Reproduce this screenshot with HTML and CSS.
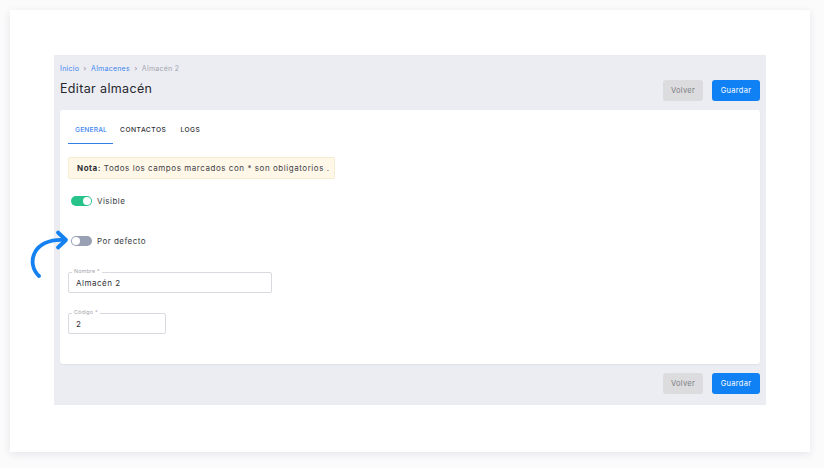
FILE: index.html
```html
<!DOCTYPE html>
<html>
<head>
<meta charset="utf-8">
<link rel="stylesheet" href="styles.css">
</head>
<body>
<div class="frame">
  <div class="panel">
    <div class="head">
      <div class="head-left">
        <nav class="crumbs"><a>Inicio</a><span class="sep">›</span><a>Almacenes</a><span class="sep">›</span><span class="cur">Almacén 2</span></nav>
        <h1 class="title">Editar almacén</h1>
      </div>
      <div class="actions">
        <button class="btn btn-grey">Volver</button>
        <button class="btn btn-blue">Guardar</button>
      </div>
    </div>
    <div class="card">
      <div class="tabs">
        <div class="tab active">GENERAL</div>
        <div class="tab">CONTACTOS</div>
        <div class="tab">LOGS</div>
      </div>
      <div class="note"><b>Nota:</b> Todos los campos marcados con * son obligatorios .</div>
      <div class="switch-row visible-row"><span class="switch on"><span class="knob"></span></span><span class="switch-label">Visible</span></div>
      <div class="switch-row default-row">
        <svg class="arrow" width="52" height="56" viewBox="0 0 52 56"><path d="M19 52 C 6 40, 12 14, 45 16" fill="none" stroke="#1581f0" stroke-width="3.8" stroke-linecap="round"/><path d="M38 8.5 L46 16 L38 23.5" fill="none" stroke="#1581f0" stroke-width="3.8" stroke-linecap="round" stroke-linejoin="round"/></svg>
        <span class="switch off"><span class="knob"></span></span><span class="switch-label">Por defecto</span></div>
      <div class="field field-name"><label>Nombre *</label><div class="input">Almacén 2</div></div>
      <div class="field field-code"><label>Código *</label><div class="input">2</div></div>
    </div>
    <div class="foot">
      <button class="btn btn-grey">Volver</button>
      <button class="btn btn-blue">Guardar</button>
    </div>
  </div>
</div>
</body>
</html>
```
FILE: styles.css
```css
* { box-sizing: border-box; }
html, body { margin: 0; padding: 0; background: #fbfbfc; }
body { font-family: "Inter", "Open Sans", sans-serif; color: #2b2d33; width: 824px; height: 468px; overflow: hidden; }
.frame {
  margin: 10px 0 0 10px;
  width: 800px; height: 442px;
  background: #fff;
  box-shadow: 0 2px 8px rgba(30, 40, 70, 0.10);
  padding: 45px 0 0 44px;
}
.panel {
  width: 712px; height: 350px;
  background: #ecedf3;
  padding: 0 6px;
  display: flex; flex-direction: column;
}
.head { height: 55px; display: flex; justify-content: space-between; padding-top: 9px; }
.crumbs { font-size: 7px; color: #a3a5ad; display: flex; align-items: center; gap: 4.5px; height: 9px; letter-spacing: 0.25px; }
.crumbs a { color: #3d86f0; }
.crumbs .sep { color: #7d808a; font-size: 7px; }
.title { margin: 8px 0 0 0; font-size: 12.5px; font-weight: 400; color: #25272d; letter-spacing: 0.35px; }
.actions { display: flex; gap: 9px; padding-top: 16px; }
.btn {
  border: 0; border-radius: 3px; height: 21px; font-family: inherit; font-size: 7.5px; padding: 0; cursor: pointer; letter-spacing: 0.3px;
}
.btn-grey { background: #dcdcdf; color: #7a7c83; width: 40px; }
.btn-blue { background: #0f81f5; color: #fff; width: 48px; }
.card {
  background: #fff; height: 254px; border-radius: 3px;
  box-shadow: 0 1px 2px rgba(0,0,0,0.05);
  padding: 0 8px; position: relative;
}
.tabs { display: flex; height: 34px; padding-top: 16px; }
.tab { font-size: 6.7px; font-weight: 500; color: #2f3137; padding: 0 7px; height: 18px; letter-spacing: 0.5px; white-space: nowrap; }
.tab.active { color: #3d86f0; border-bottom: 1.5px solid #2f7fe6; width: 45px; padding-left: 7px; padding-right: 0; letter-spacing: 0.15px; }
.note {
  margin-top: 13px; width: 267px; height: 22px;
  background: #fff8e8; border: 1px solid #f6ebcf; border-radius: 2px;
  font-size: 8px; color: #3e4047; padding: 0 0 0 8px; display: flex; align-items: center; white-space: pre; letter-spacing: 0.55px;
}
.note b { font-weight: 700; color: #2c2e35; }
.switch-row { display: flex; align-items: center; gap: 5px; height: 10px; padding-left: 3px; position: relative; }
.visible-row { margin-top: 17px; }
.default-row { margin-top: 30px; }
.switch { width: 21px; height: 10px; border-radius: 5px; position: relative; display: inline-block; }
.switch.on { background: #28c38a; }
.switch.off { background: #98a0b3; }
.knob { position: absolute; top: 1px; width: 8px; height: 8px; border-radius: 50%; background: #fff; }
.switch.on .knob { right: 1px; }
.switch.off .knob { left: 1px; }
.switch-label { font-size: 8px; color: #3a3c43; letter-spacing: 0.45px; }
.arrow { position: absolute; left: -48px; top: -12px; }
.field { position: relative; }
.field label {
  position: absolute; left: 4px; top: -4px; font-size: 5.3px; color: #a0a2a8; background: #fff; padding: 0 2px; line-height: 7px; letter-spacing: 0.2px;
}
.input {
  height: 21px; border: 1px solid #d9dadf; border-radius: 2px; font-size: 8px; color: #2f3137; letter-spacing: 0.5px;
  display: flex; align-items: center; padding-left: 7px;
}
.field-name { margin-top: 26px; width: 204px; }
.field-code { margin-top: 20px; width: 98px; }
.foot { display: flex; justify-content: flex-end; gap: 9px; padding-top: 9px; }
```
